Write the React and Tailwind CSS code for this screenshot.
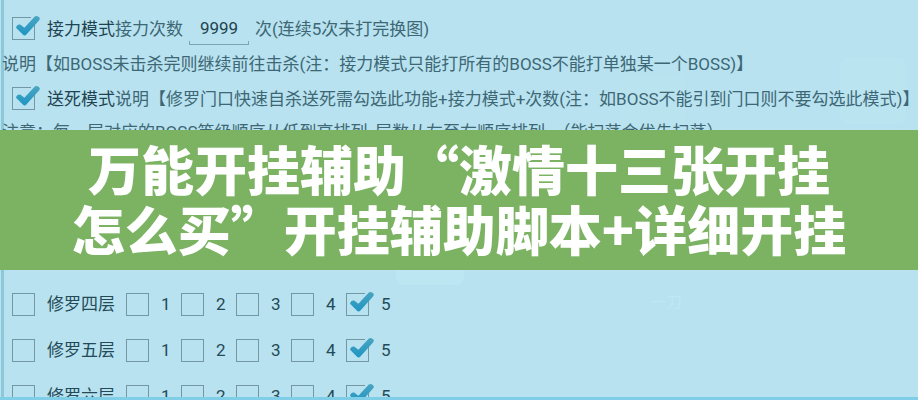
import React from "react";

const floors = ["修罗四层", "修罗五层", "修罗六层"];
const levels = [1, 2, 3, 4, 5];

function CheckBox({ id, checked = false, label }) {
    return (
        <span className="relative block size-[23px] shrink-0">
            <input id={id} type="checkbox" defaultChecked={checked} aria-label={label} className="peer block size-full appearance-none border border-[#7397a3]" />
            <svg viewBox="0 0 30 26" className="pointer-events-none absolute -top-1 left-0 hidden h-[26px] w-[30px] peer-checked:block" fill="none">
                <defs>
                    <linearGradient id="tick" x1="0" y1="0" x2="0" y2="1">
                        <stop offset="0" stopColor="#4aa5c0" />
                        <stop offset="1" stopColor="#1f95c4" />
                    </linearGradient>
                </defs>
                <path d="M19 4 L27 4 L27 9 L19 9 Z" fill="#b8e2ef" />
                <path d="M4 14.8 Q5 11 8.2 11.6 L12.4 14.8 L22.8 3.4 Q25.6 2.2 27.8 5 Q28 6.4 26.8 7.8 L14.4 21.6 Q12.6 23.4 10.8 21.6 Z" fill="url(#tick)" />
            </svg>
        </span>
    );
}

export default function App() {
    return (
        <main className="flex h-screen flex-col overflow-hidden bg-[#b8e2ef] font-['Roboto','Noto_Sans_CJK_SC',sans-serif] text-[17px] leading-6 text-[#3d6775]">
            <div className="relative flex min-h-0 flex-1 flex-col overflow-hidden">
                <div className="absolute inset-y-0 left-0 ml-px w-[3px] bg-[#8bc9da]"></div>

                {/* faded app icons showing through the panel */}
                <div className="absolute top-[58px] right-3 h-[66px] w-[66px] rounded-lg bg-[#bbe4f1]"></div>
                <div className="absolute top-[74px] right-[232px] h-[56px] w-[66px] rounded-lg bg-[#bae3f0]"></div>
                <div className="absolute top-[220px] left-[396px] h-[65px] w-[68px] rounded-lg bg-[#bde6f3]"></div>
                <div className="absolute top-[291px] right-[236px] text-base text-[#bfe8f3]">一刀</div>

                <section className="relative pt-[11px] whitespace-nowrap">
                    <div className="flex h-[35px] items-center pl-3">
                        <CheckBox id="relay" checked />
                        <label htmlFor="relay" className="ml-3 text-[#1f4351]">接力模式</label>
                        <label htmlFor="relay-count">接力次数</label>
                        <div className="relative ml-1.5 h-8">
                            <input id="relay-count" type="text" defaultValue="9999" className="block h-8 w-[60px] border-b border-[#7fa5b1] text-center text-[#1f4351] outline-none" />
                            <span className="absolute bottom-0 left-0 h-1 w-full border-x border-[#7fa5b1]"></span>
                        </div>
                        <span className="ml-1.5">次(连续5次未打完换图)</span>
                    </div>
                    <p className="flex h-[35px] items-center pl-0.5">说明【如BOSS未击杀完则继续前往击杀(注：接力模式只能打所有的BOSS不能打单独某一个BOSS)】</p>
                    <div className="flex h-[35px] items-center pl-3">
                        <CheckBox id="suicide" checked />
                        <label htmlFor="suicide" className="ml-3 text-[#1f4351]">送死模式</label>
                        <span>说明【修罗门口快速自杀送死需勾选此功能+接力模式+次数(注：如BOSS不能引到门口则不要勾选此模式)】</span>
                    </div>
                    <p className="flex h-8 items-center pl-0.5">注意：每一层对应的BOSS等级顺序从低到高排列, 层数从左至右顺序排列。（能扫荡会优先扫荡）</p>
                </section>

                {/* title banner, covers the rows in the middle of the list */}
                <div className="relative z-10 -mt-[18px] bg-[#7bb363] pt-2 pb-3 text-center">
                    <h1 className="font-['Noto_Sans_CJK_SC',sans-serif] text-[53px] leading-[60px] font-black whitespace-nowrap text-white">
                        万能开挂辅助“激情十三张开挂<br />怎么买”开挂辅助脚本+详细开挂
                    </h1>
                </div>

                <section className="relative pt-[11px] text-[#244a58]">
                    {floors.map(floor => (
                        <div key={floor} className="flex h-[46px] items-center pl-3">
                            <CheckBox id={floor} />
                            <label htmlFor={floor} className="mr-[11px] ml-3">{floor}</label>
                            {levels.map(level => (
                                <div key={level} className="flex w-[55px] items-center gap-3">
                                    <CheckBox id={`${floor}-${level}`} checked={level === 5} />
                                    <label htmlFor={`${floor}-${level}`}>{level}</label>
                                </div>
                            ))}
                        </div>
                    ))}
                </section>
            </div>
            <div className="h-[3px] shrink-0 bg-[#7fcde6]"></div>
        </main>
    );
}
